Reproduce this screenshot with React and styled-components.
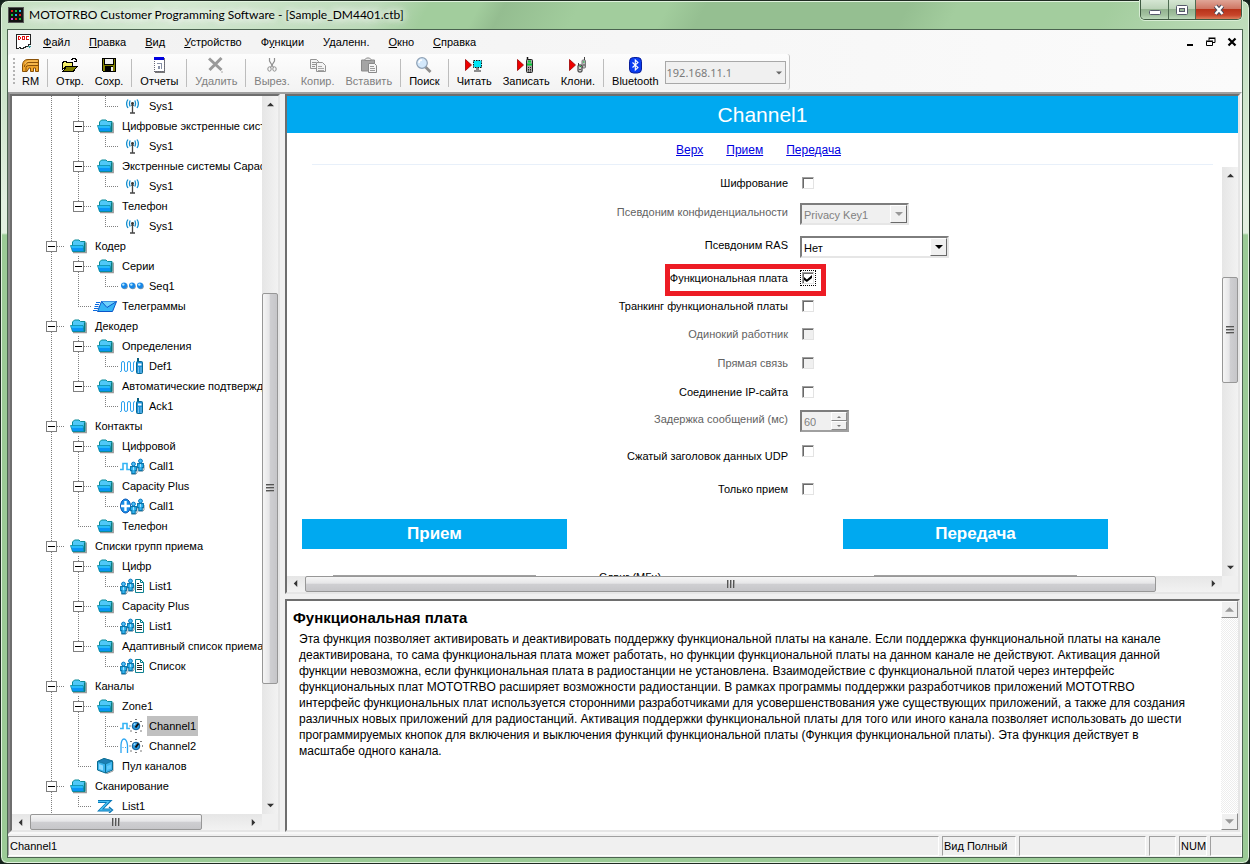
import React from "react";
import styled, { createGlobalStyle, css } from "styled-components";

const GlobalStyle = createGlobalStyle`
  * {
    box-sizing: border-box;
  }
  body {
    margin: 0;
    background: #14221d;
    color: #000;
    font-family: "Liberation Sans", Arial, sans-serif;
    font-size: 11px;
    line-height: 14px;
  }
  button, input, select {
    font: inherit;
    color: inherit;
    margin: 0;
    padding: 0;
    border: 0;
    border-radius: 0;
    background: none;
  }
  svg {
    display: block;
    flex: none;
  }
`;

/* ---------- window frame ---------- */

const Window = styled.div`
  display: flex;
  flex-direction: column;
  height: 100vh;
  padding: 0 7px 6px;
  border: 1px solid #1f2b22;
  border-radius: 8px 8px 7px 7px;
  background: linear-gradient(#bcdcb9 0, #e2efe0 200px, #e2efe0 232px, #9bcb96 234px, #9bcb96 100%);
  box-shadow: inset 0 0 0 1px #e0f2de;
`;

const TitleBar = styled.header`
  display: flex;
  align-items: flex-start;
  flex: none;
  height: 28px;
  margin: 1px -6px 0;
  padding: 0 6px;
  border-radius: 7px 7px 0 0;
  background: linear-gradient(
    118deg,
    #c4dfc1 0%,
    #d3e8d1 14%,
    #bcdab9 30%,
    #a2cd9d 34%,
    #a2cd9d 38%,
    #94bd90 40%,
    #a2cd9d 46%,
    #a2cd9d 53%,
    #95bf91 56%,
    #95bf91 72%,
    #a3cd9e 76%,
    #a3cd9e 88%,
    #c0ddbc 100%
  );
`;

const TitleIcon = styled.span`
  margin: 5px 5px 0 0;
`;

const Title = styled.h1`
  flex: 1;
  margin: 0;
  font-family: Lato, "Open Sans", sans-serif;
  font-size: 12px;
  font-weight: 400;
  line-height: 26px;
  white-space: nowrap;
  text-shadow: 0 0 8px #fff, 0 0 8px #fff, 0 0 12px #fff;
`;

const CaptionButtons = styled.div`
  display: flex;
  height: 20px;
  margin-top: -2px;
  border: 1px solid #3f5a42;
  border-top: 0;
  border-radius: 0 0 5px 5px;
  box-shadow: 0 0 0 1px #d8edd5;
  overflow: hidden;
`;

const CaptionButton = styled.button`
  display: flex;
  align-items: center;
  justify-content: center;
  width: ${props => (props.$close ? 46 : 27)}px;
  border-left: ${props => (props.$first ? "0" : "1px solid #4f6b52")};
  background: ${props =>
    props.$close
      ? "linear-gradient(#e0a597 0, #cf7664 45%, #b8331a 50%, #c8452a 80%, #dc7f5c 100%)"
      : "linear-gradient(#d5e6d3 0, #bdd4ba 45%, #93b390 50%, #a3c2a0 80%, #bddabb 100%)"};
`;

const Client = styled.div`
  display: flex;
  flex-direction: column;
  flex: 1;
  min-height: 0;
  background: #f0f0f0;
  outline: 1px solid #4b6450;
`;

/* ---------- menu and toolbar ---------- */

const MenuBar = styled.nav`
  display: flex;
  align-items: center;
  flex: none;
  height: 24px;
  padding: 0 4px 0 8px;
  background: linear-gradient(90deg, #f1f1f1, #fbfbfb);
`;

const MenuItem = styled.button`
  padding: 0 10px 0 9px;
  white-space: nowrap;

  &:first-of-type {
    margin-left: 2px;
  }
`;

const MdiButtons = styled.div`
  display: flex;
  gap: 8px;
  margin-left: auto;
`;

const MdiButton = styled.button`
  display: flex;
  align-items: center;
  justify-content: center;
  width: 13px;
  height: 14px;
`;

const ToolBarRow = styled.div`
  flex: none;
  height: 38px;
  background: linear-gradient(90deg, #f1f1f1, #fbfbfb);
`;

const ToolBar = styled.div`
  display: inline-flex;
  height: 36px;
  padding: 0 3px 0 5px;
  border-right: 1px solid #c5c5c5;
  border-radius: 3px;
  background: linear-gradient(#fdfdfd, #f3f3f3);
`;

const Grip = styled.span`
  width: 2px;
  height: 28px;
  margin: 4px 2px 0 0;
  background: repeating-linear-gradient(#b4b4b4 0 2px, transparent 2px 4px);
`;

const Separator = styled.span`
  width: 1px;
  height: 28px;
  margin: 5px 2px 0;
  background: #bdbdbd;
`;

const Tool = styled.button`
  display: flex;
  flex-direction: column;
  align-items: center;
  justify-content: space-between;
  height: 34px;
  padding: 3px 6px 0 5px;
  color: ${props => (props.disabled ? "#808080" : "#000")};
  white-space: nowrap;

  ${Separator} + & {
    padding-left: 6px;
  }
`;

const AddressBox = styled.div`
  display: flex;
  align-items: center;
  width: 121px;
  height: 23px;
  margin-top: 7px;
  padding-right: 3px;
  border: 1px solid #a8a8a8;
  background: #f0f0f0;
  color: #7a7a7a;
`;

const AddressSelect = styled.select`
  flex: 1;
  min-width: 0;
  appearance: none;
  padding-left: 1px;
  font-family: "Noto Sans", "Open Sans", sans-serif;
  font-size: 11px;
  opacity: 1;
`;

/* ---------- panes ---------- */

const sunken = css`
  border: 2px solid;
  border-color: #6e6e6e #e6e6e6 #e6e6e6 #6e6e6e;
`;

const Workspace = styled.main`
  display: flex;
  gap: 5px;
  flex: 1;
  min-height: 0;
  border: 2px solid;
  border-color: #a0a0a0 #f8f8f8 #f8f8f8 #8c8c8c;
`;

const TreePane = styled.aside`
  ${sunken}
  display: flex;
  flex-direction: column;
  flex: none;
  width: 270px;
  background: #f0f0f0;
`;

const RightSide = styled.div`
  display: flex;
  flex-direction: column;
  gap: 5px;
  flex: 1;
  min-width: 0;
`;

const ChannelPane = styled.section`
  ${sunken}
  display: flex;
  flex-direction: column;
  flex: 501 1 0;
  min-height: 0;
  background: #fff;
`;

const HelpPane = styled.section`
  ${sunken}
  display: flex;
  flex: 232 1 0;
  min-height: 0;
  background: #fff;
`;

const PaneRow = styled.div`
  display: flex;
  flex: 1;
  min-height: 0;
`;

const FormArea = styled(PaneRow)`
  padding-top: 2px;
`;

/* ---------- scroll bars ---------- */

const Bar = styled.div`
  display: flex;
  flex: none;
  flex-direction: ${props => (props.$horizontal ? "row" : "column")};
  ${props => (props.$horizontal ? "height: 16px;" : "width: 16px;")}
  background: ${props => (props.$horizontal ? "linear-gradient(#e6e6e6, #f2f2f2)" : "linear-gradient(90deg, #e6e6e6, #f2f2f2)")};
`;

const BarButton = styled.button`
  display: flex;
  align-items: center;
  justify-content: center;
  flex: none;
  ${props => (props.$horizontal ? "width: 17px;" : "height: 17px;")}
`;

const BarSpace = styled.span`
  flex: ${props => props.$size} 1 0;
`;

const Thumb = styled.span`
  display: flex;
  align-items: center;
  justify-content: center;
  flex: ${props => props.$size} 1 0;
  border: 1px solid #979797;
  border-radius: 2px;
  background: ${props =>
    props.$horizontal
      ? "linear-gradient(#f5f5f5 0, #e6e6e8 45%, #cfcfd2 50%, #c6c6c9 100%)"
      : "linear-gradient(90deg, #f5f5f5 0, #e6e6e8 45%, #cfcfd2 50%, #c6c6c9 100%)"};
`;

const ThumbGrip = styled.span`
  width: 8px;
  height: 8px;
  background: repeating-linear-gradient(
    ${props => (props.$horizontal ? "90deg" : "180deg")},
    #555 0 1px,
    #a8a8a8 1px 2px,
    transparent 2px 3px
  );
`;

const ClassicBar = styled.div`
  display: flex;
  flex-direction: column;
  justify-content: space-between;
  flex: none;
  width: 17px;
  background: repeating-conic-gradient(#fff 0 25%, #ededed 0 50%) 0 0 / 2px 2px;
`;

const raised = css`
  border: 1px solid;
  border-color: #fff #8a8a8a #8a8a8a #fff;
  background: #f0f0f0;
`;

const ClassicButton = styled.button`
  ${raised}
  display: flex;
  align-items: center;
  justify-content: center;
  height: 17px;
`;

const arrowTurn = { up: 180, down: 0, left: 90, right: 270 };

function Arrow({ to, size = 7, color = "#333" }) {
  return (
    <svg width={size} height={size} viewBox="0 0 8 8">
      <path d="M0 2h8L4 6z" fill={color} transform={`rotate(${arrowTurn[to]} 4 4)`} />
    </svg>
  );
}

function ScrollBar({ horizontal, before, size, after }) {
  return (
    <Bar $horizontal={horizontal}>
      <BarButton $horizontal={horizontal} aria-label={horizontal ? "Влево" : "Вверх"}>
        <Arrow to={horizontal ? "left" : "up"} />
      </BarButton>
      <BarSpace $size={before} />
      <Thumb $size={size} $horizontal={horizontal}>
        <ThumbGrip $horizontal={horizontal} />
      </Thumb>
      <BarSpace $size={after} />
      <BarButton $horizontal={horizontal} aria-label={horizontal ? "Вправо" : "Вниз"}>
        <Arrow to={horizontal ? "right" : "down"} />
      </BarButton>
    </Bar>
  );
}

const HorizontalRow = styled.div`
  display: flex;
  flex: none;
  padding-right: 16px;
  background: #f0f0f0;

  > div {
    flex: 1;
  }
`;

/* ---------- tree ---------- */

const TreeList = styled.ul`
  flex: 1;
  min-width: 0;
  margin: 0;
  padding: 0 0 0 26px;
  list-style: none;
  overflow: hidden;
  background: #fff;
`;

const TreeRow = styled.li`
  display: flex;
  align-items: center;
  height: 20px;
  white-space: nowrap;
`;

// dotted guide lines are background layers of the cell
const vertical = height =>
  `repeating-linear-gradient(#808080 0 1px, transparent 1px 2px) 13px 0 / 1px ${height} no-repeat`;
const horizontalLine =
  "repeating-linear-gradient(90deg, #808080 0 1px, transparent 1px 2px) 13px 10px / 14px 1px no-repeat";

const guides = {
  " ": "none",
  "|": vertical("100%"),
  "T": `${vertical("100%")}, ${horizontalLine}`,
  "L": `${vertical("10px")}, ${horizontalLine}`,
  "+": `${vertical("100%")}, ${horizontalLine}`,
  "-": `${vertical("10px")}, ${horizontalLine}`
};

const Cell = styled.span`
  display: flex;
  align-items: center;
  flex: none;
  width: 27px;
  height: 20px;
  padding: 1px 0 0 8px;
  background: ${props => guides[props.$guide]};
`;

const Toggle = styled.button`
  display: flex;
  align-items: center;
  justify-content: center;
  width: 11px;
  height: 11px;
  border: 1px solid #808080;
  background: #fff;

  &::before {
    content: "";
    width: 7px;
    height: 1px;
    background: #000;
  }
`;

const IconCell = styled.span`
  display: flex;
  align-items: center;
  justify-content: center;
  flex: none;
  width: 27px;
`;

const NodeLabel = styled.span`
  margin-left: 1px;
  padding: 0 2px;
  line-height: 20px;
  background: ${props => (props.$selected ? "#c0c0c0" : "none")};
`;

/* ---------- channel form ---------- */

const ChannelTitle = styled.h2`
  flex: none;
  margin: 0;
  background: #00a9f0;
  color: #fff;
  font-size: 21px;
  font-weight: 400;
  line-height: 37px;
  text-align: center;
`;

const Links = styled.nav`
  display: flex;
  justify-content: center;
  align-items: center;
  gap: 23px;
  flex: none;
  height: 32px;
  margin: 0 25px;
  padding: 2px 8px 0 0;
  border-bottom: 1px solid #e8f0fa;
  font-size: 12px;
`;

const Link = styled.a`
  color: #0000e0;
`;

const FormView = styled.form`
  flex: 1;
  min-width: 0;
  padding-top: 1px;
  overflow: hidden;
`;

const FieldLabel = styled.label`
  position: relative;
  justify-self: end;
  white-space: nowrap;
  color: ${props => (props.$disabled ? "#626262" : "#000")};
  margin-bottom: ${props => (props.$raised ? 4 : 0)}px;

  ${props =>
    props.$marked &&
    css`
      &::after {
        content: "";
        position: absolute;
        inset: -7px -38px -11px -5px;
        border: 5px solid #ed1c24;
        pointer-events: none;
      }
    `}
`;

const CheckBox = styled.input`
  display: block;
  appearance: none;
  width: 12px;
  height: 12px;
  margin-left: 2px;
  border: 1px solid;
  border-color: #a0a0a0 #e3e3e3 #e3e3e3 #a0a0a0;
  box-shadow: inset 1px 1px 0 #696969;
  background: #fff;

  &:disabled {
    background: #f0f0f0;
  }
  &:checked {
    outline: 1px dotted #000;
    outline-offset: 1px;
  }
  &:checked::before {
    content: "";
    display: block;
    width: 8px;
    height: 7px;
    margin: 2px 0 0 1px;
    background: #000;
    clip-path: polygon(0 29%, 36% 64%, 100% 0, 100% 43%, 36% 100%, 0 71%);
  }
`;

const FieldRow = styled.div`
  display: grid;
  grid-template-columns: 501fr 422fr;
  column-gap: 12px;
  align-items: center;
  height: ${props => props.$height}px;

  ${props =>
    props.$split &&
    css`
      ${FieldLabel} {
        margin-top: 4px;
      }
      ${CheckBox} {
        margin-bottom: 6px;
      }
    `}
`;

const SelectFrame = styled.div`
  display: flex;
  width: ${props => props.$width}px;
  height: 22px;
  border: 2px solid;
  border-color: #7d7d7d #e6e6e6 #e6e6e6 #7d7d7d;
  background: ${props => (props.$disabled ? "#f0f0f0" : "#fff")};
`;

const Select = styled.select`
  flex: 1;
  min-width: 0;
  appearance: none;
  padding: 2px 0 0 2px;
  opacity: 1;
  color: ${props => (props.disabled ? "#808080" : "#000")};
`;

const DropArrow = styled.span`
  ${raised}
  display: flex;
  align-items: center;
  justify-content: center;
  width: 17px;
  border-color: #fff #696969 #696969 #fff;
`;

const Spin = styled.div`
  display: flex;
  width: 49px;
  height: 22px;
  border: 2px solid;
  border-color: #7d7d7d #a0a0a0 #a0a0a0 #7d7d7d;
  background: #f0f0f0;
`;

const SpinInput = styled.input`
  flex: 1;
  min-width: 0;
  padding: 2px 0 0 2px;
  appearance: textfield;
  color: #808080;
`;

const SpinButtons = styled.div`
  display: flex;
  flex-direction: column;
  width: 16px;
`;

const SpinButton = styled.button`
  ${raised}
  display: flex;
  align-items: center;
  justify-content: center;
  flex: 1;
`;

const Sections = styled.div`
  display: grid;
  grid-template-columns: 265fr 276fr 265fr;
  margin-top: 13px;
  padding: 0 114px 0 15px;
`;

const SectionTitle = styled.h3`
  grid-column: ${props => props.$column};
  margin: 0;
  background: #00a9f0;
  color: #fff;
  font-size: 17px;
  line-height: 30px;
  text-align: center;
`;

const CenterLabel = styled.label`
  grid-column: 2;
  margin-top: 21px;
  padding-left: 32px;
`;

const FrequencyInput = styled.input`
  grid-column: ${props => props.$column};
  grid-row: 2;
  height: 21px;
  margin: 26px 31px 0;
  border: 1px solid #a0a0a0;
`;

/* ---------- help ---------- */

const HelpText = styled.article`
  flex: 1;
  min-width: 0;
  padding: 8px 6px 0;
`;

const HelpTitle = styled.h2`
  margin: 0 0 4px;
  font-size: 15px;
  line-height: 18px;
`;

const HelpBody = styled.p`
  margin: 0 0 0 6px;
  font-size: 12px;
  line-height: 16px;
`;

/* ---------- status bar ---------- */

const StatusBar = styled.footer`
  display: flex;
  gap: 3px;
  flex: none;
  height: 23px;
  padding: 2px 0 1px;
`;

const StatusPane = styled.span`
  flex: ${props => (props.$width ? `none` : 1)};
  width: ${props => (props.$width ? `${props.$width}px` : "auto")};
  padding-left: 1px;
  border: 1px solid;
  border-color: #a0a0a0 #fff #fff #a0a0a0;
  line-height: 18px;
  white-space: nowrap;
`;

/* ---------- icons ---------- */

const Person = ({ x, y }) => (
  <g transform={`translate(${x} ${y})`}>
    <path d="M1.5 12h4.500l1-1V6" fill="none" stroke="#8f9aa0" strokeWidth="1" />
    <circle cx="3.500" cy="2" r="1.900" fill="#4cc0f8" stroke="#0a78c0" strokeWidth="1" />
    <path d="M.6 4.600h5.800v4H5.200v3H1.800v-3H.6z" fill="#35b6f2" stroke="#0b74a8" strokeWidth="1.100" />
    <path d="M3.500 5v3" stroke="#a8e4ff" />
  </g>
);

const Knob = () => (
  <g>
    <circle cx="16" cy="8" r="3.8" fill="#2c9be0" stroke="#0a5a94" />
    <path d="M15.5 9.500l3-4" stroke="#111" strokeWidth="2" />
    <path d="M13.800 7l1.500-1.500" stroke="#a5e2ff" strokeWidth="1.200" />
    <path
      d="M16 1v1M16 14v1M11 3v1M21 3v1M9.500 8h1M22 8h1M11 12.500v1M21 12.500v1"
      stroke="#222"
      strokeWidth="1.2"
    />
  </g>
);

const Sheet = () => (
  <g>
    <path d="M15.500 1.500h5l3 3v10h-8z" fill="#fff" stroke="#0c8090" />
    <path d="M20.500 1.500v3h3" fill="none" stroke="#0c8090" />
    <path d="M17 5.500h2M17 7.500h5M17 9.500h5M17 11.500h5" stroke="#222" />
  </g>
);

const treeIcons = {
  folder: (
    <svg width="17" height="15" viewBox="0 0 17 15">
      <path d="M3 13.500h13.200V3.500" fill="none" stroke="#9a9a9a" strokeWidth="1.400" />
      <path d="M2.500 12V3l2-2h4.500l1.500 1.500h4.500v10H3z" fill="#4fc8f8" stroke="#0a8a96" strokeWidth="1" />
      <path d="M.5 6.500h12.500l1 6H2.500z" fill="#0a94f5" stroke="#0a8a96" strokeWidth=".8" />
      <path d="M1.200 7.300h11.500M1.600 8.300h11.300" stroke="#2fc4fb" />
      <path d="M14.500 3.500v9" stroke="#0a7a80" strokeWidth="1.200" />
    </svg>
  ),
  tower: (
    <svg width="13" height="15" viewBox="0 0 13 15" fill="none">
      <path d="M6.500 4v10M4 14h5" stroke="#444" strokeWidth="1.300" />
      <path d="M5.500 7L6.500 5l1 2" stroke="#444" />
      <circle cx="6.500" cy="4.500" r="1.400" fill="#333" />
      <path
        d="M4.200 1.500Q2.700 4.500 4.200 7.500M8.800 1.500Q10.300 4.500 8.800 7.500M2 .500Q-.8 4.500 2 9M11 .500Q13.800 4.500 11 9"
        stroke="#1590d0"
        strokeWidth="1.300"
      />
    </svg>
  ),
  seq: (
    <svg width="25" height="15" viewBox="0 0 25 15">
      {[4, 12, 20].map(x => (
        <g key={x}>
          <circle cx={x + 0.8} cy="7.300" r="3" fill="#7b97ad" />
          <circle cx={x} cy="6.500" r="3" fill="#1787e8" />
          <circle cx={x - 0.7} cy="5.600" r="1.200" fill="#b5e8ff" />
        </g>
      ))}
    </svg>
  ),
  mail: (
    <svg width="25" height="15" viewBox="0 0 25 15">
      <path d="M8.500 2.500h15l-4 10h-15z" fill="#35b5f5" stroke="#0a55c8" />
      <path d="M8.500 2.500l5.500 6 9.500-6" fill="#6fd0fb" stroke="#0a55c8" />
      <path d="M3 3.500h4M2 5.500h4M1.500 7.500h4M1 9.500h4M0 11.500h4" stroke="#0a6adf" />
    </svg>
  ),
  def: (
    <svg width="25" height="17" viewBox="0 0 25 17">
      <path
        d="M0 13.500h1Q1.500 13.500 1.500 12V5q0-1.500 1.500-1.500T4.500 5v7q0 1.500 1.500 1.500T7.500 12V5Q7.500 3.500 9 3.500T10.500 5v7q0 1.500 1.500 1.500t1.500-1.500V5q0-1.500 1.500-1.500"
        fill="none"
        stroke="#2ba0ef"
      />
      <path d="M18 0v4" stroke="#0a5f80" strokeWidth="2" />
      <rect x="16.500" y="3.500" width="6" height="12" rx="1" fill="#1a8fd8" stroke="#0a6a94" />
      <path d="M18 5.500h3.500v2H18z" fill="#fff" />
      <path d="M18 10h1M20.500 10h1M18 12h1M20.500 12h1M18 14h1M20.500 14h1" stroke="#d8f3ff" />
    </svg>
  ),
  call: (
    <svg width="25" height="17" viewBox="0 0 25 17">
      <path d="M0 11.500h3v-6h4v6h4" fill="none" stroke="#35b5f5" strokeWidth="1.600" />
      <Person x={10} y={4} />
      <Person x={17} y={1} />
    </svg>
  ),
  callPlus: (
    <svg width="25" height="17" viewBox="0 0 25 17">
      <ellipse cx="5.500" cy="8" rx="5" ry="7" fill="#1a8ee6" stroke="#0a58b8" />
      <path d="M5.500 3v10M1 8h9" stroke="#fff" strokeWidth="2.400" />
      <Person x={10} y={4} />
      <Person x={17} y={1} />
    </svg>
  ),
  list: (
    <svg width="25" height="17" viewBox="0 0 25 17">
      <Person x={0} y={4} />
      <Person x={7} y={1} />
      <Sheet />
    </svg>
  ),
  digital: (
    <svg width="25" height="16" viewBox="0 0 25 16">
      <path d="M0 10.500h3v-5h4v5h3" fill="none" stroke="#35b5f5" strokeWidth="1.600" />
      <Knob />
    </svg>
  ),
  analog: (
    <svg width="25" height="16" viewBox="0 0 25 16">
      <path d="M1 15V7Q1.500 1 4 1t3.500 6v8" fill="none" stroke="#2ba5f2" strokeWidth="1.300" />
      <path d="M2.500 9.500h1M5 9.500h1" stroke="#2ba5f2" />
      <Knob />
    </svg>
  ),
  cube: (
    <svg width="17" height="16" viewBox="0 0 17 16">
      <path d="M9 16l7-3V4" fill="none" stroke="#999" />
      <path d="M.5 3.500L7 .5l8.500 2.500v9l-7 3-8-3z" fill="#3cb4ee" stroke="#0a6c90" />
      <path d="M.5 3.500L8.500 6l7-3L7 .5z" fill="#1c7fb5" stroke="#0a6c90" strokeWidth=".6" />
      <path d="M2 6l4 1.500v5L2 11z" fill="#8fdcff" />
      <path d="M8.500 6v9" stroke="#0a6c90" />
      <path d="M10 8l4-1.500v4L10 12z" fill="#5ec9fa" />
    </svg>
  ),
  scan: (
    <svg width="17" height="14" viewBox="0 0 17 14" fill="none">
      <path d="M1 2.500h11L3.500 11h10" stroke="#0878b8" strokeWidth="3" />
      <path d="M1 2.500h10.500L3.500 11h10" stroke="#4cc4f5" strokeWidth="1.200" />
      <path d="M12 8l3.500 3-3.500 3" stroke="#0878b8" strokeWidth="1.400" />
    </svg>
  )
};

const RedArrow = () => <path d="M.5 2.500v11L6.500 8z" fill="#f00000" stroke="#900" strokeWidth=".8" />;

const toolIcons = {
  rm: (
    <svg width="17" height="16" viewBox="0 0 17 16" fill="none">
      <path d="M.5 14.500V8Q1 2.500 6 2.500h10.500v12h-3V11h-2v3.500h-3V11H7l-2 3.500z" fill="#f0a52c" stroke="#8a5208" />
      <path d="M4 14v-3.500Q4 8.500 7 8.500h9" stroke="#8a5208" />
      <path d="M2.500 10Q2.500 5.500 7 5.500h9" stroke="#8a5208" />
      <path d="M3 7.500Q4 4 7 4h8.500M6 7h9" stroke="#ffd27c" strokeWidth=".8" />
    </svg>
  ),
  open: (
    <svg width="16" height="16" viewBox="0 0 16 16" shapeRendering="crispEdges">
      <path d="M0 13V5h1V4h3v1h6v4H4z" fill="#f5f06a" stroke="#000" />
      <path d="M1 14l4-5h10.500l-4 5z" fill="#808000" stroke="#000" />
      <path d="M9 2.500h1v-1h3v1h1v2M12 4.500h3M14.500 2v3" fill="none" stroke="#000" />
    </svg>
  ),
  save: (
    <svg width="16" height="16" viewBox="0 0 16 16" shapeRendering="crispEdges">
      <path d="M1 1h14v14H2l-1-1z" fill="#000" />
      <path d="M2 2h1v6h10V2h1v12H2z" fill="#808000" />
      <path d="M4 2h8v5H4z" fill="#f0f0f0" />
      <path d="M4 9h8v5H4z" fill="#000" />
      <path d="M10 10h2v4h-2z" fill="#f0f0f0" />
    </svg>
  ),
  report: (
    <svg width="16" height="16" viewBox="0 0 16 16" shapeRendering="crispEdges">
      <path d="M4 2h10v14H4z" fill="#777" />
      <path d="M3 1h10v13H3z" fill="#fff" stroke="#667" strokeDasharray="1 1" />
      <path d="M3 0h10v3H3z" fill="#0000e0" />
      <path d="M6 6h5v1H6zM10 6h1v6h-1zM7 9h2v3H7z" fill="#8891a8" />
    </svg>
  ),
  remove: (
    <svg width="16" height="16" viewBox="0 0 16 16">
      <path d="M1 1.500l12.500 11.500M13.500 1L1.500 13" stroke="#9a9a9a" strokeWidth="3" />
      <path d="M13 15h2" stroke="#aaa" />
    </svg>
  ),
  cut: (
    <svg width="16" height="16" viewBox="0 0 16 16" fill="none" stroke="#8f8f8f">
      <path d="M5.500 1v3l4 6.500M10.500 1v3l-4 6.500" strokeWidth="1.200" />
      <ellipse cx="5.500" cy="12" rx="1.700" ry="2.200" />
      <ellipse cx="10.500" cy="12" rx="1.700" ry="2.200" />
    </svg>
  ),
  copy: (
    <svg width="16" height="16" viewBox="0 0 16 16" fill="#f4f4f4" stroke="#949494">
      <path d="M.5 2.500h6l2 2v7h-8z" />
      <path d="M2 5.500h4M2 7.500h4M2 9.500h3" />
      <path d="M6.500 5.500h6l3 3v6h-9z" />
      <path d="M8 9.500h4M8 11.500h6M8 13.500h6" strokeWidth=".8" />
    </svg>
  ),
  paste: (
    <svg width="16" height="16" viewBox="0 0 16 16">
      <path d="M.5 3h13v11H.5z" fill="#a5a5a5" stroke="#8a8a8a" />
      <path d="M4 3.500h6v-1L8.500 1h-3L4 2.500z" fill="#e8e8e8" stroke="#8a8a8a" />
      <path d="M7.500 6.500h6l2 2v7h-8z" fill="#f5f5f5" stroke="#8a8a8a" />
      <path d="M9 9.500h4M9 11.500h5M9 13.500h5" stroke="#9a9a9a" />
    </svg>
  ),
  search: (
    <svg width="18" height="17" viewBox="0 0 18 17">
      <path d="M10 9.500l5.500 5.500" stroke="#8c8c8c" strokeWidth="2.800" />
      <circle cx="7" cy="6" r="5.300" fill="#d3e8fb" stroke="#8da0b5" strokeWidth="1.200" />
      <path d="M4 6q0-3 3-3" stroke="#fff" strokeWidth="1.400" fill="none" />
    </svg>
  ),
  read: (
    <svg width="18" height="16" viewBox="0 0 18 16">
      <RedArrow />
      <path d="M8.500 3.500h8v7h-8z" fill="#00e5f5" stroke="#111" strokeDasharray="1.500 1" />
      <path d="M11 11h3v2h-3z" fill="#888" />
      <path d="M9 14h7" stroke="#444" strokeWidth="1.200" />
    </svg>
  ),
  write: (
    <svg width="18" height="16" viewBox="0 0 18 16">
      <RedArrow />
      <path d="M10.500 0v3" stroke="#111" strokeWidth="1.500" />
      <rect x="9.500" y="2.500" width="6" height="13" rx="1" fill="#a8a8a8" stroke="#222" />
      <path d="M11 4.500h3M10 7.500h5" stroke="#0c3" strokeWidth="2" />
      <path d="M11 10.500h3M11 12.500h3M11 14h3" stroke="#222" strokeDasharray="1 1" />
    </svg>
  ),
  clone: (
    <svg width="18" height="16" viewBox="0 0 18 16">
      <RedArrow />
      <rect x="13" y="3" width="3.500" height="8" rx="1" fill="#bbb" stroke="#777" />
      <path d="M15.500 0v3M9.500 6v3" stroke="#444" />
      <rect x="9" y="8" width="4" height="7" rx="1" fill="#d0d0d0" stroke="#222" />
      <path d="M10.500 9.500h1.500M14 5h1.500" stroke="#0b3" />
      <path d="M10 12.500h2M14 8h2" stroke="#222" strokeDasharray=".7 .6" />
    </svg>
  ),
  bluetooth: (
    <svg width="13" height="17" viewBox="0 0 13 17">
      <rect x=".5" y=".5" width="12" height="15.500" rx="4" fill="#0a3cf0" stroke="#0a1e9a" />
      <path d="M3.500 5.500l5.500 5-2.700 2.500v-10L9 5.500l-5.500 5" fill="none" stroke="#fff" strokeWidth="1.100" />
    </svg>
  )
};

/* ---------- data ---------- */

const menu = [
  ["", "Ф", "айл"],
  ["", "П", "равка"],
  ["", "В", "ид"],
  ["", "У", "стройство"],
  ["Ф", "у", "нкции"],
  ["У", "д", "аленн."],
  ["", "О", "кно"],
  ["", "С", "правка"]
];

const tools = [
  ["rm", "RM"],
  null,
  ["open", "Откр."],
  ["save", "Сохр."],
  null,
  ["report", "Отчеты"],
  null,
  ["remove", "Удалить", true],
  null,
  ["cut", "Вырез.", true],
  ["copy", "Копир.", true],
  ["paste", "Вставить", true],
  null,
  ["search", "Поиск"],
  null,
  ["read", "Читать"],
  ["write", "Записать"],
  ["clone", "Клони."],
  null,
  ["bluetooth", "Bluetooth"]
];

// one guide character per column: + and - are expanded nodes, T and L are leaves
const tree = [
  ["||L", "tower", "Sys1"],
  ["|+", "folder", "Цифровые экстренные системы"],
  ["||L", "tower", "Sys1"],
  ["|+", "folder", "Экстренные системы Capacity Plus"],
  ["||L", "tower", "Sys1"],
  ["|-", "folder", "Телефон"],
  ["| L", "tower", "Sys1"],
  ["+", "folder", "Кодер"],
  ["|+", "folder", "Серии"],
  ["||L", "seq", "Seq1"],
  ["|L", "mail", "Телеграммы"],
  ["+", "folder", "Декодер"],
  ["|+", "folder", "Определения"],
  ["||L", "def", "Def1"],
  ["|-", "folder", "Автоматические подтверждения"],
  ["| L", "def", "Ack1"],
  ["+", "folder", "Контакты"],
  ["|+", "folder", "Цифровой"],
  ["||L", "call", "Call1"],
  ["|+", "folder", "Capacity Plus"],
  ["||L", "callPlus", "Call1"],
  ["|L", "folder", "Телефон"],
  ["+", "folder", "Списки групп приема"],
  ["|+", "folder", "Цифр"],
  ["||L", "list", "List1"],
  ["|+", "folder", "Capacity Plus"],
  ["||L", "list", "List1"],
  ["|-", "folder", "Адаптивный список приема"],
  ["| L", "list", "Список"],
  ["+", "folder", "Каналы"],
  ["|+", "folder", "Zone1"],
  ["||T", "digital", "Channel1"],
  ["||L", "analog", "Channel2"],
  ["|L", "cube", "Пул каналов"],
  ["+", "folder", "Сканирование"],
  ["|L", "scan", "List1"]
];

const fields = [
  { id: "privacy", label: "Шифрование", height: 30 },
  { id: "privacyAlias", label: "Псевдоним конфиденциальности", height: 32, select: "Privacy Key1", width: 109, disabled: true },
  { id: "rasAlias", label: "Псевдоним RAS", height: 34, select: "Нет", width: 149 },
  { id: "optionBoard", label: "Функциональная плата", height: 28, checked: true, marked: true },
  { id: "boardTrunking", label: "Транкинг функциональной платы", height: 28 },
  { id: "loneWorker", label: "Одинокий работник", height: 28, disabled: true },
  { id: "talkaround", label: "Прямая связь", height: 30, disabled: true },
  { id: "ipSite", label: "Соединение IP-сайта", height: 28 },
  { id: "delay", label: "Задержка сообщений (мс)", height: 30, spin: 60, disabled: true },
  { id: "udpHeader", label: "Сжатый заголовок данных UDP", height: 36, split: true },
  { id: "rxOnly", label: "Только прием", height: 34 }
];

const helpLines = [
  "Эта функция позволяет активировать и деактивировать поддержку функциональной платы на канале. Если поддержка функциональной платы на канале",
  "деактивирована, то сама функциональная плата может работать, но функции функциональной платы на данном канале не действуют. Активация данной",
  "функции невозможна, если функциональная плата в радиостанции не установлена. Взаимодействие с функциональной платой через интерфейс",
  "функциональных плат MOTOTRBO расширяет возможности радиостанции. В рамках программы поддержки разработчиков приложений MOTOTRBO",
  "интерфейс функциональных плат используется сторонними разработчиками для усовершенствования уже существующих приложений, а также для создания",
  "различных новых приложений для радиостанций. Активация поддержки функциональной платы для того или иного канала позволяет использовать до шести",
  "программируемых кнопок для включения и выключения функций функциональной платы (Функция функциональной платы). Эта функция действует в",
  "масштабе одного канала."
];

/* ---------- components ---------- */

function TreeNode({ guide, icon, label }) {
  return (
    <TreeRow>
      {guide.split("").map((char, index) => (
        <Cell key={index} $guide={char}>
          {(char === "+" || char === "-") && <Toggle aria-label="Свернуть" />}
        </Cell>
      ))}
      <IconCell>{treeIcons[icon]}</IconCell>
      <NodeLabel $selected={label === "Channel1"}>{label}</NodeLabel>
    </TreeRow>
  );
}

function Control({ field }) {
  if (field.select) {
    return (
      <SelectFrame $width={field.width} $disabled={field.disabled}>
        <Select id={field.id} disabled={field.disabled}>
          <option>{field.select}</option>
        </Select>
        <DropArrow>
          <Arrow to="down" size={8} color={field.disabled ? "#999" : "#000"} />
        </DropArrow>
      </SelectFrame>
    );
  }
  if (field.spin) {
    return (
      <Spin>
        <SpinInput id={field.id} type="number" defaultValue={field.spin} disabled />
        <SpinButtons>
          <SpinButton disabled aria-label="Больше">
            <Arrow to="up" size={4} color="#777" />
          </SpinButton>
          <SpinButton disabled aria-label="Меньше">
            <Arrow to="down" size={4} color="#777" />
          </SpinButton>
        </SpinButtons>
      </Spin>
    );
  }
  return <CheckBox id={field.id} type="checkbox" defaultChecked={field.checked} disabled={field.disabled} />;
}

function Caption() {
  return (
    <TitleBar>
      <TitleIcon>
        <svg width="16" height="16" viewBox="0 0 16 16" shapeRendering="crispEdges">
          <path d="M0 0h16v16H0z" fill="#555" />
          <path d="M1 1h14v14H1z" fill="#111" />
          <path d="M3 3h2v2H3zM11 7h2v2h-2zM7 11h2v2H7z" fill="#e02020" />
          <path d="M7 3h2v2H7zM3 7h2v2H3zM11 11h2v2h-2z" fill="#18c030" />
          <path d="M11 3h2v2h-2zM7 7h2v2H7z" fill="#20b0f0" />
          <path d="M3 11h2v2H3z" fill="#d040e0" />
        </svg>
      </TitleIcon>
      <Title>MOTOTRBO Customer Programming Software - [Sample_DM4401.ctb]</Title>
      <CaptionButtons>
        <CaptionButton $first aria-label="Свернуть окно">
          <svg width="12" height="12" viewBox="0 0 12 12">
            <rect x=".5" y="6.500" width="11" height="4" rx="1" fill="#fff" stroke="#555a6a" />
          </svg>
        </CaptionButton>
        <CaptionButton aria-label="Развернуть окно">
          <svg width="12" height="12" viewBox="0 0 12 12">
            <rect x=".5" y="1.500" width="11" height="9" rx="1" fill="#fff" stroke="#555a6a" />
            <rect x="3.500" y="4.500" width="5" height="3" fill="#9cbb99" stroke="#555a6a" />
          </svg>
        </CaptionButton>
        <CaptionButton $close aria-label="Закрыть окно">
          <svg width="12" height="12" viewBox="0 0 12 12">
            <path d="M2.500 2l7 8M9.500 2l-7 8" stroke="#4b4b5c" strokeWidth="4.400" />
            <path d="M2.500 2l7 8M9.500 2l-7 8" stroke="#fff" strokeWidth="2.400" />
          </svg>
        </CaptionButton>
      </CaptionButtons>
    </TitleBar>
  );
}

function Menu() {
  return (
    <MenuBar>
      <svg width="16" height="16" viewBox="0 0 16 16" shapeRendering="crispEdges">
        <path d="M.5 .5h14v10h-2v2h-2l-2 1-2 1h-1l-2-1-1 1h-2z" fill="#fff" stroke="#222" />
        <path
          d="M2 2h1v4H2zM3 2h1v1H3zM3 5h1v1H3zM4 3h1v2H4zM6 2h3v4H6zM10 2h3v1h-3zM10 2h1v4h-1zM10 5h3v1h-3z"
          fill="#e01010"
        />
        <path d="M7 3h1v2H7z" fill="#fff" />
        <path d="M12 12h3v1h-3zM13 13h1v1h-1z" fill="#3a9a9a" />
      </svg>
      {menu.map(([before, key, after]) => (
        <MenuItem key={before + key + after}>
          {before}
          <u>{key}</u>
          {after}
        </MenuItem>
      ))}
      <MdiButtons>
        <MdiButton aria-label="Свернуть документ">
          <svg width="10" height="10" viewBox="0 0 10 10">
            <path d="M2 7h6v2H2z" />
          </svg>
        </MdiButton>
        <MdiButton aria-label="Восстановить документ">
          <svg width="10" height="10" viewBox="0 0 10 10" fill="none" stroke="#000">
            <path d="M3 3.500V1.500h6v4H7M2.500 1h7" />
            <path d="M.5 4.500h6v4h-6zM0 4h7" />
          </svg>
        </MdiButton>
        <MdiButton aria-label="Закрыть документ">
          <svg width="10" height="10" viewBox="0 0 10 10">
            <path d="M1.500 1.500l7 7M8.500 1.500l-7 7" stroke="#000" strokeWidth="2.200" />
          </svg>
        </MdiButton>
      </MdiButtons>
    </MenuBar>
  );
}

export default function App() {
  return (
    <Window>
      <GlobalStyle />
      <Caption />
      <Client>
        <Menu />
        <ToolBarRow>
          <ToolBar>
            <Grip />
            {tools.map((tool, index) =>
              tool ? (
                <Tool key={tool[0]} disabled={tool[2]}>
                  {toolIcons[tool[0]]}
                  <span>{tool[1]}</span>
                </Tool>
              ) : (
                <Separator key={index} />
              )
            )}
            <AddressBox>
              <AddressSelect aria-label="IP-адрес" disabled>
                <option>192.168.11.1</option>
              </AddressSelect>
              <Arrow to="down" size={6} color="#666" />
            </AddressBox>
          </ToolBar>
        </ToolBarRow>
        <Workspace>
          <TreePane>
            <PaneRow>
              <TreeList>
                {tree.map(([guide, icon, label], index) => (
                  <TreeNode key={index} guide={guide} icon={icon} label={label} />
                ))}
              </TreeList>
              <ScrollBar before={180} size={390} after={113} />
            </PaneRow>
            <HorizontalRow>
              <ScrollBar horizontal before={1} size={172} after={44} />
            </HorizontalRow>
          </TreePane>
          <RightSide>
            <ChannelPane>
              <ChannelTitle>Channel1</ChannelTitle>
              <Links>
                <Link href="#top">Верх</Link>
                <Link href="#rx">Прием</Link>
                <Link href="#tx">Передача</Link>
              </Links>
              <FormArea>
                <FormView>
                  {fields.map(field => (
                    <FieldRow key={field.id} $height={field.height} $split={field.split}>
                      <FieldLabel
                        htmlFor={field.id}
                        $disabled={field.disabled}
                        $raised={field.select || field.spin}
                        $marked={field.marked}
                      >
                        {field.label}
                      </FieldLabel>
                      <Control field={field} />
                    </FieldRow>
                  ))}
                  <Sections>
                    <SectionTitle id="rx" $column={1}>Прием</SectionTitle>
                    <SectionTitle id="tx" $column={3}>Передача</SectionTitle>
                    <FrequencyInput $column={1} aria-label="Частота приема" />
                    <CenterLabel htmlFor="txFrequency">Сдвиг (МГц)</CenterLabel>
                    <FrequencyInput $column={3} id="txFrequency" />
                  </Sections>
                </FormView>
                <ScrollBar before={94} size={104} after={177} />
              </FormArea>
              <HorizontalRow>
                <ScrollBar horizontal before={1} size={851} after={49} />
              </HorizontalRow>
            </ChannelPane>
            <HelpPane>
              <HelpText>
                <HelpTitle>Функциональная плата</HelpTitle>
                <HelpBody>
                  {helpLines.map(line => (
                    <React.Fragment key={line}>
                      {line}
                      <br />
                    </React.Fragment>
                  ))}
                </HelpBody>
              </HelpText>
              <ClassicBar>
                <ClassicButton disabled aria-label="Вверх">
                  <Arrow to="up" size={9} color="#999" />
                </ClassicButton>
                <ClassicButton disabled aria-label="Вниз">
                  <Arrow to="down" size={9} color="#999" />
                </ClassicButton>
              </ClassicBar>
            </HelpPane>
          </RightSide>
        </Workspace>
        <StatusBar>
          <StatusPane>Channel1</StatusPane>
          <StatusPane $width={74}>Вид Полный</StatusPane>
          <StatusPane $width={127}></StatusPane>
          <StatusPane $width={27}></StatusPane>
          <StatusPane $width={28}>NUM</StatusPane>
          <StatusPane $width={32}></StatusPane>
        </StatusBar>
      </Client>
    </Window>
  );
}
